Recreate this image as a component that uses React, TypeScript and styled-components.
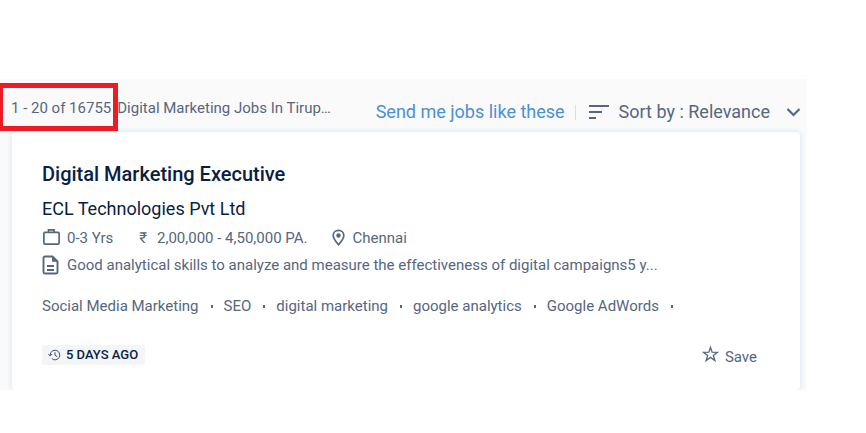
import React from "react";
import styled, { createGlobalStyle } from "styled-components";

const GlobalStyle = createGlobalStyle`
  * { box-sizing: border-box; }
  body { margin: 0; background: #fff; font-family: Roboto, "Noto Sans", sans-serif; color: #566680; }
  h1, h2, p, ul { margin: 0; padding: 0; font-weight: 400; }
  button { font: inherit; color: inherit; background: none; border: 0; padding: 0; cursor: pointer; }
`;

const Page = styled.main`
  padding: 79px 59px 43px 0;
`;

const Results = styled.section`
  background: #fafafa;
  overflow: hidden;
`;

const Toolbar = styled.header`
  display: flex;
  align-items: flex-start;
  padding-left: 11px;
  height: 53px;
`;

const Summary = styled.h1`
  display: flex;
  gap: 6px;
  padding-top: 18px;
  font-size: 15px;
  line-height: 22px;
  white-space: nowrap;
`;

const Count = styled.span`
  position: relative;

  &::after {
    content: "";
    position: absolute;
    inset: -14px -7px -12px -13px;
    border: 5px solid #ed1c24;
  }
`;

const Actions = styled.div`
  display: flex;
  align-items: center;
  margin-left: auto;
  padding: 22px 6px 0 0;
  font-size: 18px;
  line-height: 22px;
  white-space: nowrap;
`;

const AlertLink = styled.a`
  color: #4a90d9;
  text-decoration: none;
`;

const Divider = styled.span`
  width: 1px;
  height: 15px;
  margin: 0 13px 0 10px;
  background: #c9e4f5;
`;

const SortButton = styled.button`
  display: flex;
  align-items: center;
  gap: 10px;
`;

const Chevron = styled.svg`
  margin-left: 6px;
`;

const Card = styled.article`
  margin: 0 7px 0 12px;
  padding: 30px 43px 21px 30px;
  background: #fff;
  border-radius: 4px;
  box-shadow: 0 0 5px 1px #dce8f3;
`;

const Title = styled.h2`
  color: #091e42;
  font-size: 20px;
  font-weight: 500;
  line-height: 24px;
`;

const Company = styled.p`
  margin-top: 11px;
  color: #091e42;
  font-size: 18px;
  line-height: 24px;
`;

const Facts = styled.ul`
  display: flex;
  gap: 24px;
  margin-top: 7px;
  list-style: none;
`;

const Fact = styled.li<{ $gap: number }>`
  display: flex;
  align-items: center;
  gap: ${({ $gap }) => $gap}px;
  font-size: 15px;
  line-height: 20px;
  white-space: nowrap;
`;

const Rupee = styled.span`
  padding-left: 2px;
`;

const Description = styled.p`
  display: flex;
  align-items: center;
  gap: 7px;
  margin-top: 7px;
  font-size: 15px;
  line-height: 20px;
`;

const Tags = styled.ul`
  display: flex;
  flex-wrap: wrap;
  margin-top: 21px;
  list-style: none;
`;

const Tag = styled.li`
  display: flex;
  align-items: center;
  font-size: 15px;
  line-height: 20px;

  &::after {
    content: "";
    width: 2px;
    height: 3px;
    margin: 0 11px 0 12px;
    background: #566680;
  }
`;

const Footer = styled.footer`
  display: flex;
  align-items: flex-start;
  justify-content: space-between;
  margin-top: 29px;
`;

const Posted = styled.span`
  display: flex;
  align-items: center;
  gap: 5px;
  padding: 0 7px 0 6px;
  border-radius: 2px;
  background: #f4f5f7;
  color: #091e42;
  font-size: 13px;
  font-weight: 500;
  line-height: 20px;
`;

const SaveButton = styled.button`
  display: flex;
  align-items: flex-start;
  gap: 6px;
  font-size: 15px;
  line-height: 24px;
`;

const TAGS = ["Social Media Marketing", "SEO", "digital marketing", "google analytics", "Google AdWords"];

const SortIcon = () => (
  <svg width="20" height="14" viewBox="0 0 20 14" fill="#566680" aria-hidden="true">
    <path d="M0 0h20v2H0zM0 6h13v2H0zM0 12h7v2H0z" />
  </svg>
);

const BriefcaseIcon = () => (
  <svg width="18" height="18" viewBox="0 0 18 18" fill="none" stroke="#566680" strokeWidth="1.7" aria-hidden="true">
    <rect x="1.9" y="3.4" width="15.2" height="11.7" rx="1" />
    <path d="M6.5 3V.9h5.5V3" />
  </svg>
);

const PinIcon = () => (
  <svg width="13" height="18" viewBox="0 0 13 18" aria-hidden="true">
    <path d="M6.5 1.3C3.5 1.3 1.2 3.6 1.2 6.5c0 3.4 3.2 6.6 5.3 9.2 2.1-2.6 5.3-5.8 5.3-9.2 0-2.9-2.3-5.2-5.3-5.2z" fill="none" stroke="#566680" strokeWidth="1.7" />
    <circle cx="6.5" cy="6.5" r="2.2" fill="#566680" />
  </svg>
);

const DocumentIcon = () => (
  <svg width="18" height="20" viewBox="0 0 18 20" aria-hidden="true">
    <path d="M10.5 1.5H3A1.5 1.5 0 0 0 1.5 3v14A1.5 1.5 0 0 0 3 18.5h11a1.5 1.5 0 0 0 1.5-1.5V6.5z" fill="none" stroke="#566680" strokeWidth="1.9" strokeLinejoin="round" />
    <path d="M10 1.5v5.3h5.8zM5 10h7v2H5zM5 14h7v2H5z" fill="#566680" />
  </svg>
);

const HistoryIcon = () => (
  <svg width="13" height="12" viewBox="0 0 13 12" fill="none" stroke="#42526e" aria-hidden="true">
    <path d="M2.2 6a4.8 4.8 0 1 1 1.6 3.6M.3 5l1.9 2 1.9-2M7 3.2V6.3l2.2 1.3" />
  </svg>
);

const StarIcon = () => (
  <svg width="17" height="18" viewBox="0 0 17 18" fill="none" stroke="#566680" strokeWidth="1.3" aria-hidden="true">
    <path d="M8.5 2.4l1.6 4.8 5.5.1-4.3 3.2 1.6 5-4.4-3.1-4.4 3.1 1.6-5-4.3-3.2 5.5-.1z" />
  </svg>
);

export default function App() {
  return (
    <>
      <GlobalStyle />
      <Page>
        <Results>
          <Toolbar>
            <Summary>
              <Count>1 - 20 of 16755</Count>
              <span>Digital Marketing Jobs In Tirup…</span>
            </Summary>
            <Actions>
              <AlertLink href="#alerts">Send me jobs like these</AlertLink>
              <Divider />
              <SortButton type="button">
                <SortIcon />
                <span>Sort by : Relevance</span>
                <Chevron width="15" height="10" viewBox="0 0 15 10" fill="none" stroke="#566680" strokeWidth="2.2" aria-hidden="true">
                  <path d="M1.5 2l6 6 6-6" />
                </Chevron>
              </SortButton>
            </Actions>
          </Toolbar>
          <Card>
            <Title>Digital Marketing Executive</Title>
            <Company>ECL Technologies Pvt Ltd</Company>
            <Facts>
              <Fact $gap={7}><BriefcaseIcon />0-3 Yrs</Fact>
              <Fact $gap={10}><Rupee>₹</Rupee>2,00,000 - 4,50,000 PA.</Fact>
              <Fact $gap={8}><PinIcon />Chennai</Fact>
            </Facts>
            <Description>
              <DocumentIcon />
              Good analytical skills to analyze and measure the effectiveness of digital campaigns5 y...
            </Description>
            <Tags>
              {TAGS.map((tag) => <Tag key={tag}>{tag}</Tag>)}
            </Tags>
            <Footer>
              <Posted><HistoryIcon />5 DAYS AGO</Posted>
              <SaveButton type="button"><StarIcon />Save</SaveButton>
            </Footer>
          </Card>
        </Results>
      </Page>
    </>
  );
}
